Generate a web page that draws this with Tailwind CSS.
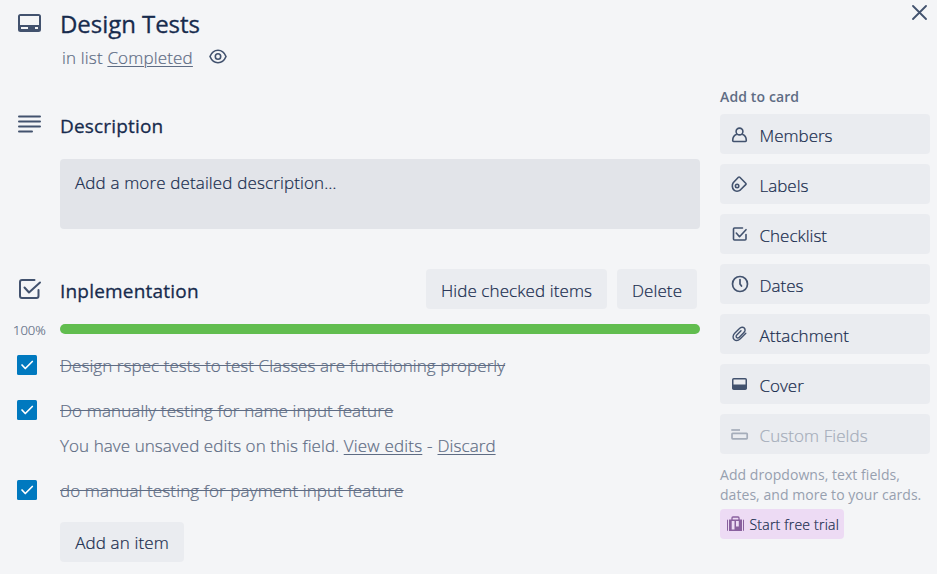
<!DOCTYPE html>
<html lang="en">
<head>
<meta charset="utf-8">
<title>Design Tests</title>
<script src="https://cdn.jsdelivr.net/npm/@tailwindcss/browser@4"></script>
</head>
<body class="h-[574px] w-[937px] overflow-hidden bg-[#f4f5f7] font-['Open_Sans','Noto_Sans',sans-serif] text-[17px] leading-5 font-light whitespace-nowrap text-[#172b4d] [-webkit-text-stroke:0.2px]">
<div class="flex h-full">
  <main class="w-[700px] shrink-0">
    <header class="flex h-[114px] pt-[10px]">
      <div class="w-[60px] shrink-0 pt-1 pl-[18px]">
        <svg class="h-[18px] w-[23px]" viewBox="0 0 23 18"><path fill="#42526e" fill-rule="evenodd" d="M2.5 0h18A2.5 2.5 0 0 1 23 2.5v13a2.5 2.5 0 0 1-2.500 2.500h-18A2.500 2.500 0 0 1 0 15.500v-13A2.500 2.500 0 0 1 2.500 0ZM2 2v9h19V2ZM3 13v2h7v-2ZM17 13v2h3v-2Z"/></svg>
      </div>
      <div>
        <h1 class="text-[24px] leading-7 font-normal tracking-[-0.05px] [-webkit-text-stroke:0.3px]">Design Tests</h1>
        <div class="mt-[9px] flex pl-[2px] text-[#5e6c84]">
          <p class="pt-px tracking-[0.17px]">in list <a class="underline decoration-1 underline-offset-[2px]">Completed</a></p>
          <svg class="mt-[2px] ml-4 h-[15px] w-[18px]" viewBox="0 0 18 15" fill="none" stroke="#42526e" stroke-width="1.600"><path d="M1 7.500C2.700 3.300 5.500 1.300 9 1.300s6.300 2 8 6.200c-1.700 4.200-4.500 6.200-8 6.200S2.700 11.700 1 7.500Z"/><circle cx="9" cy="7.500" r="2.700"/></svg>
        </div>
      </div>
    </header>

    <section class="h-[155px]">
      <div class="flex h-[45px]">
        <div class="w-[60px] shrink-0 pt-px pl-[18px]">
          <svg class="h-[18px] w-[23px]" viewBox="0 0 23 18" stroke="#42526e" stroke-width="2" stroke-linecap="round"><path d="M1 1.500h21M1 6.500h21M1 11.500h21M1 16.500h13"/></svg>
        </div>
        <h2 class="text-[19px] leading-6 font-normal tracking-[0.18px] [-webkit-text-stroke:0.3px]">Description</h2>
      </div>
      <div class="ml-[60px] h-[70px] rounded-[4px] bg-[#e2e4e9] px-[15px] pt-[14px] tracking-[0.14px]">Add a more detailed description…</div>
    </section>

    <section>
      <div class="flex h-10">
        <div class="w-[60px] shrink-0 pt-[10px] pl-[19px]">
          <svg class="h-[21px] w-[23px]" viewBox="0 0 23 21" fill="none" stroke="#42526e" stroke-width="2" stroke-linecap="round" stroke-linejoin="round"><path d="M15.500 1H3a2 2 0 0 0-2 2v14a2 2 0 0 0 2 2h14.500a2 2 0 0 0 2-2v-6"/><path d="m5.500 8.500 4.500 5L21 3.500"/></svg>
        </div>
        <h2 class="flex-1 pt-[10px] text-[19px] leading-6 font-normal tracking-[0.2px] [-webkit-text-stroke:0.3px]">Inplementation</h2>
        <button class="mr-[10px] w-[181px] rounded-[4px] bg-[#eaecf0] pt-1 tracking-[0.1px]">Hide checked items</button>
        <button class="mr-[3px] w-20 rounded-[4px] bg-[#eaecf0] pt-1 tracking-[0.1px]">Delete</button>
      </div>
      <div class="flex h-[46px] pt-[15px]">
        <span class="-mt-px w-[60px] pl-[13px] text-[13px] leading-[14px] text-[#5e6c84]">100%</span>
        <div class="h-[10px] flex-1 rounded-full bg-[#61bd4f]"></div>
      </div>
      <ul class="text-[#5e6c84]">
        <li class="flex h-[45px]">
          <svg class="mr-[23px] ml-[17px] size-5" viewBox="0 0 20 20" fill="none"><rect width="20" height="20" rx="1.500" fill="#0079bf"/><path d="m5 10 3.300 3.500L15.300 6.500" stroke="#fff" stroke-width="1.700" stroke-linecap="round" stroke-linejoin="round"/></svg>
          <span class="mt-px tracking-[0.06px] line-through">Design rspec tests to test Classes are functioning properly</span>
        </li>
        <li class="flex h-20">
          <svg class="mr-[23px] ml-[17px] size-5" viewBox="0 0 20 20" fill="none"><rect width="20" height="20" rx="1.500" fill="#0079bf"/><path d="m5 10 3.300 3.500L15.300 6.500" stroke="#fff" stroke-width="1.700" stroke-linecap="round" stroke-linejoin="round"/></svg>
          <div class="pt-px">
            <p class="tracking-[0.12px]"><span class="line-through">Do manually testing for name input feature</span></p>
            <p class="mt-[15px] tracking-[0.07px]">You have unsaved edits on this field. <a class="tracking-[0.2px] underline decoration-1 underline-offset-[2px]">View edits</a><span class="tracking-[0.3px]"> - </span><a class="underline decoration-1 underline-offset-[2px]">Discard</a></p>
          </div>
        </li>
        <li class="flex h-[42px]">
          <svg class="mr-[23px] ml-[17px] size-5" viewBox="0 0 20 20" fill="none"><rect width="20" height="20" rx="1.500" fill="#0079bf"/><path d="m5 10 3.300 3.500L15.300 6.500" stroke="#fff" stroke-width="1.700" stroke-linecap="round" stroke-linejoin="round"/></svg>
          <span class="mt-px tracking-[0.12px] line-through">do manual testing for payment input feature</span>
        </li>
      </ul>
      <button class="ml-[60px] h-10 w-[124px] rounded-[4px] bg-[#eaecf0] pt-[2px] tracking-[0.14px]">Add an item</button>
    </section>
  </main>

  <aside class="ml-5 w-[217px]">
    <div class="flex h-[87px] justify-end pt-[5px] pr-[10px]">
      <svg class="size-[15px]" viewBox="0 0 15 15" stroke="#42526e" stroke-width="1.800" stroke-linecap="round"><path d="m1 1 13 13M14 1 1 14"/></svg>
    </div>
    <h3 class="h-[27px] text-[14px] font-semibold tracking-[0.12px] text-[#5e6c84] [-webkit-text-stroke:0]">Add to card</h3>
    <div class="flex w-[210px] flex-col gap-[10px]">
      <a class="flex h-10 items-center rounded-[4px] bg-[#eaecf0] pt-1 pl-[10px]">
        <svg class="mr-[9.500px] mb-[3px] size-5" viewBox="0 0 20 20" fill="none" stroke="#42526e" stroke-width="1.600" stroke-linejoin="round"><circle cx="9.500" cy="6.500" r="3.400"/><path d="M6.800 9.300C4 10.300 2.700 12.500 2.700 15.600c0 .6.300.9.900.9h11.800c.6 0 .9-.3.900-.9 0-3.100-1.300-5.300-4.100-6.300"/></svg>Members</a>
      <a class="flex h-10 items-center rounded-[4px] bg-[#eaecf0] pt-1 pl-[10px]">
        <svg class="mr-[9.500px] mb-1 size-5" viewBox="0 0 20 20" fill="none" stroke="#42526e" stroke-width="1.600" stroke-linejoin="round"><path d="M3.200 8.700 8.400 3.300q.7-.7 1.400 0l5.900 5.900q.7.700 0 1.400l-5.200 5.200c-2 1.700-5 1.800-6.700.1s-2-5.200-.6-7.200Z"/><circle cx="7.100" cy="12" r="1.700"/></svg>Labels</a>
      <a class="flex h-10 items-center rounded-[4px] bg-[#eaecf0] pt-1 pl-[10px]">
        <svg class="mr-[9.500px] mb-1 size-5" viewBox="0 0 20 20" fill="none" stroke="#42526e" stroke-width="1.600" stroke-linecap="round" stroke-linejoin="round"><path d="M12.500 4H4.500a1 1 0 0 0-1 1v10a1 1 0 0 0 1 1h10.500a1 1 0 0 0 1-1v-4.500M6.300 9l3.200 3.700 6.500-7"/></svg>Checklist</a>
      <a class="flex h-10 items-center rounded-[4px] bg-[#eaecf0] pt-1 pl-[10px]">
        <svg class="mr-[9.500px] mb-1 size-5" viewBox="0 0 20 20" fill="none" stroke="#42526e" stroke-width="1.700" stroke-linecap="round"><circle cx="10" cy="10" r="7.500"/><path d="M10 5.500V10l1.500 2"/></svg>Dates</a>
      <a class="flex h-10 items-center rounded-[4px] bg-[#eaecf0] pt-1 pl-[10px] tracking-[0.08px]">
        <svg class="mr-[9.500px] mb-1 size-5" viewBox="0 0 20 20" fill="none" stroke="#42526e" stroke-width="1.400" stroke-linecap="round" stroke-linejoin="round"><path d="m15.800 9.200-5.500 5.500c-2 2-4.600 2.200-6.200.7s-1.300-4.200.6-6.100l4.800-4.800c1.500-1.500 3.600-1.600 4.800-.4s1 3.100-.4 4.500l-4.600 4.600c-.9.900-2 .9-2.700.3s-.6-1.700.2-2.500l4.200-4.200"/></svg>Attachment</a>
      <a class="flex h-10 items-center rounded-[4px] bg-[#eaecf0] pt-1 pl-[10px]">
        <svg class="mr-[9.500px] mb-1 size-5" viewBox="0 0 20 20"><rect x="2.750" y="4.750" width="13.500" height="10.500" rx="1" fill="none" stroke="#42526e" stroke-width="1.500"/><path fill="#42526e" d="M2.500 10.500h14v4.500h-14z"/></svg>Cover</a>
      <a class="flex h-10 items-center rounded-[4px] bg-[#eaecf0] pt-1 pl-[10px] tracking-[0.08px] text-[#a5adba]">
        <svg class="mr-[9.500px] mb-1 size-5" viewBox="0 0 20 20" fill="none" stroke="#a5adba" stroke-width="1.700"><path d="M1.300 6h8.700"/><rect x="2" y="9.300" width="15.200" height="5.500" rx=".7"/></svg>Custom Fields</a>
    </div>
    <p class="mt-[11px] text-[14px] font-normal tracking-[0.05px] text-[#97a0af] [-webkit-text-stroke:0]">Add dropdowns, text fields,<br>dates, and more to your cards.</p>
    <a class="mt-1 flex h-[30px] w-[124px] items-center rounded-[4px] bg-[#eddbf4] pl-[6.500px] text-[14px] tracking-[0.22px]">
      <svg class="mr-[6px] mb-px h-[16px] w-[17px]" viewBox="0 0 17 16"><path fill="#89609e" fill-rule="evenodd" d="M0 4.500Q0 3.500 1 3.500V15Q0 15 0 14ZM2 3.500h13V15H2ZM16 3.500q1 0 1 1V14q0 1-1 1ZM4.700 5v8.500h2.800V5ZM9 5v5.500h2.800v-5.500Z"/><path fill="none" stroke="#89609e" stroke-width="1.300" d="M5 4V2q0-1 1-1h5q1 0 1 1v2"/></svg><span class="pt-px">Start free trial</span></a>
  </aside>
</div>
</body>
</html>
